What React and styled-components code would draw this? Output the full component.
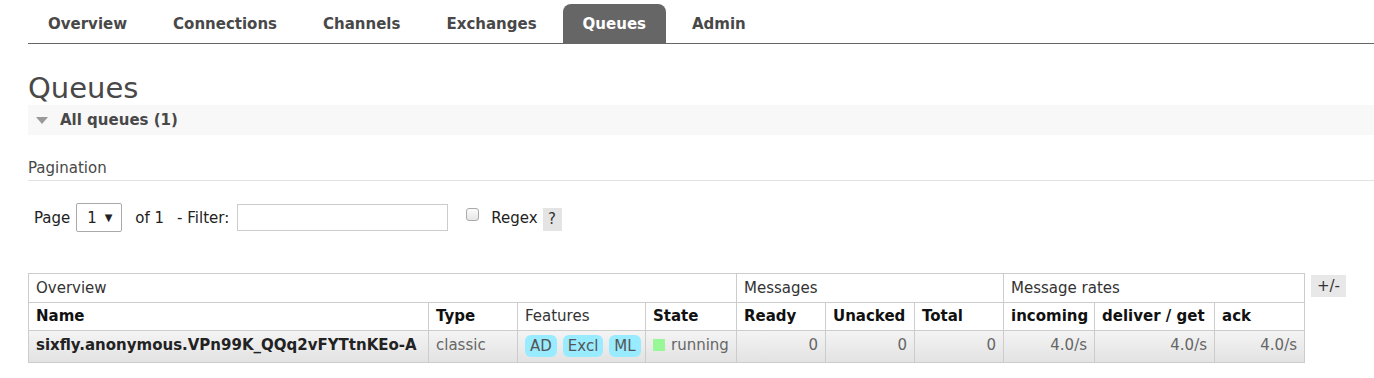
import React from "react";
import styled, { createGlobalStyle } from "styled-components";

const GlobalStyle = createGlobalStyle`
  body {
    margin: 0;
    background: #fff;
    font-family: "DejaVu Sans", Verdana, sans-serif;
    font-size: 15px;
    color: #484848;
  }
`;

const Page = styled.div`
  padding-left: 28px;
`;

const Menu = styled.ul`
  display: flex;
  list-style: none;
  margin: 0;
  padding: 4px 0 0;
  border-bottom: 1px solid #666;
`;

const Tab = styled.li`
  height: 39px;
  line-height: 40px;
  padding: 0 20px;
  margin-right: 6px;
  font-weight: bold;
  font-size: 15px;
  border-radius: 8px 8px 0 0;
  background: ${(p) => (p.$active ? "#666" : "transparent")};
  color: ${(p) => (p.$active ? "#fff" : "#484848")};
`;

const Title = styled.h1`
  margin: 27px 0 0;
  font-size: 29px;
  line-height: 34px;
  font-weight: normal;
  color: #484848;
`;

const SectionBar = styled.div`
  display: flex;
  align-items: center;
  height: 30px;
  background: #f8f8f8;
  font-weight: bold;
  color: #484848;
`;

const Arrow = styled.span`
  width: 0;
  height: 0;
  margin: 1px 12px 0 8px;
  border-left: 6px solid transparent;
  border-right: 6px solid transparent;
  border-top: 7px solid #999;
`;

const SubTitle = styled.h3`
  margin: 23px 0 0;
  padding-bottom: 2px;
  font-size: 15px;
  line-height: 20px;
  font-weight: normal;
  color: #484848;
  border-bottom: 1px solid #e2e2e2;
`;

const Pager = styled.div`
  display: flex;
  align-items: center;
  height: 29px;
  margin: 22px 0 0 6px;
  color: #222;
`;

const Select = styled.div`
  display: flex;
  align-items: center;
  justify-content: space-between;
  box-sizing: border-box;
  width: 46px;
  height: 29px;
  margin: 0 13px 0 6px;
  padding: 0 9px 0 10px;
  border: 1px solid #aaa;
  border-radius: 2px;
  font-size: 15px;

  span:last-child {
    font-size: 10px;
  }
`;

const Gap = styled.span`
  margin-left: ${(p) => p.$w}px;
`;

const FilterInput = styled.div`
  box-sizing: border-box;
  width: 211px;
  height: 27px;
  margin-left: 8px;
  border: 1px solid #ccc;
`;

const Check = styled.span`
  box-sizing: border-box;
  width: 13px;
  height: 13px;
  margin: -6px 12px 0 18px;
  border: 1px solid #aaa;
  border-radius: 3px;
  background: linear-gradient(#fbfbfb, #e6e6e6);
`;

const Help = styled.span`
  display: inline-flex;
  align-items: center;
  justify-content: center;
  width: 19px;
  height: 23px;
  margin: 3px 0 0 5px;
  background: #e4e4e4;
  color: #333;
`;

const TableWrap = styled.div`
  display: flex;
  align-items: flex-start;
  margin-top: 41px;
`;

const Table = styled.table`
  width: 1276px;
  border-collapse: collapse;
  font-size: 15px;
  table-layout: fixed;
`;

const Th = styled.th`
  box-sizing: border-box;
  height: 28.5px;
  padding: 0 7px;
  border: 1px solid #ccc;
  text-align: left;
  font-weight: ${(p) => (p.$plain ? "normal" : "bold")};
  color: ${(p) => (p.$plain ? "#333" : "#111")};
  white-space: nowrap;
  overflow: hidden;
`;

const Row = styled.tr`
  background: linear-gradient(#f4f4f4, #e2e2e2);
`;

const Td = styled.td`
  box-sizing: border-box;
  height: 32px;
  padding: 4px 7px 4px;
  border: 1px solid #ccc;
  vertical-align: top;
  line-height: 20px;
  text-align: ${(p) => (p.$num ? "right" : "left")};
  font-weight: ${(p) => (p.$bold ? "bold" : "normal")};
  color: ${(p) => (p.$bold ? "#222" : "#666")};
  white-space: nowrap;
`;

const Badge = styled.span`
  display: inline-block;
  vertical-align: top;
  height: 22px;
  line-height: 23px;
  padding: 0 5px;
  margin: 0 6px 0 0;
  border-radius: 6px;
  background: #99ebff;
  color: #555;

  &:last-child {
    margin-right: 0;
  }
`;

const StateDot = styled.span`
  display: inline-block;
  width: 12px;
  height: 12px;
  margin: 0 6px -1px 0;
  background: #98f898;
`;

const Toggle = styled.span`
  display: inline-flex;
  align-items: center;
  justify-content: center;
  width: 35px;
  height: 22px;
  margin: 2px 0 0 6px;
  background: #e8e8e8;
  color: #333;
`;

const tabs = ["Overview", "Connections", "Channels", "Exchanges", "Queues", "Admin"];

const columns = [
  { label: "Name", w: 400 },
  { label: "Type", w: 89 },
  { label: "Features", w: 128, plain: true },
  { label: "State", w: 91 },
  { label: "Ready", w: 89 },
  { label: "Unacked", w: 89 },
  { label: "Total", w: 89 },
  { label: "incoming", w: 91 },
  { label: "deliver / get", w: 120 },
  { label: "ack", w: 90 },
];

export default function App() {
  return (
    <>
      <GlobalStyle />
      <Page>
        <Menu>
          {tabs.map((t) => (
            <Tab key={t} $active={t === "Queues"}>
              {t}
            </Tab>
          ))}
        </Menu>

        <Title>Queues</Title>
        <SectionBar>
          <Arrow />
          All queues (1)
        </SectionBar>

        <SubTitle>Pagination</SubTitle>
        <Pager>
          Page
          <Select>
            <span>1</span>
            <span>▼</span>
          </Select>
          of 1
          <Gap $w={13}>- Filter:</Gap>
          <FilterInput />
          <Check />
          Regex
          <Help>?</Help>
        </Pager>

        <TableWrap>
          <Table>
            <colgroup>
              {columns.map((c) => (
                <col key={c.label} style={{ width: c.w }} />
              ))}
            </colgroup>
            <thead>
              <tr>
                <Th $plain colSpan={4}>Overview</Th>
                <Th $plain colSpan={3}>Messages</Th>
                <Th $plain colSpan={3}>Message rates</Th>
              </tr>
              <tr>
                {columns.map((c) => (
                  <Th key={c.label} $plain={c.plain}>
                    {c.label}
                  </Th>
                ))}
              </tr>
            </thead>
            <tbody>
              <Row>
                <Td $bold>sixfly.anonymous.VPn99K_QQq2vFYTtnKEo-A</Td>
                <Td>classic</Td>
                <Td>
                  <Badge>AD</Badge>
                  <Badge>Excl</Badge>
                  <Badge>ML</Badge>
                </Td>
                <Td>
                  <StateDot />
                  running
                </Td>
                <Td $num>0</Td>
                <Td $num>0</Td>
                <Td $num>0</Td>
                <Td $num>4.0/s</Td>
                <Td $num>4.0/s</Td>
                <Td $num>4.0/s</Td>
              </Row>
            </tbody>
          </Table>
          <Toggle>+/-</Toggle>
        </TableWrap>
      </Page>
    </>
  );
}
